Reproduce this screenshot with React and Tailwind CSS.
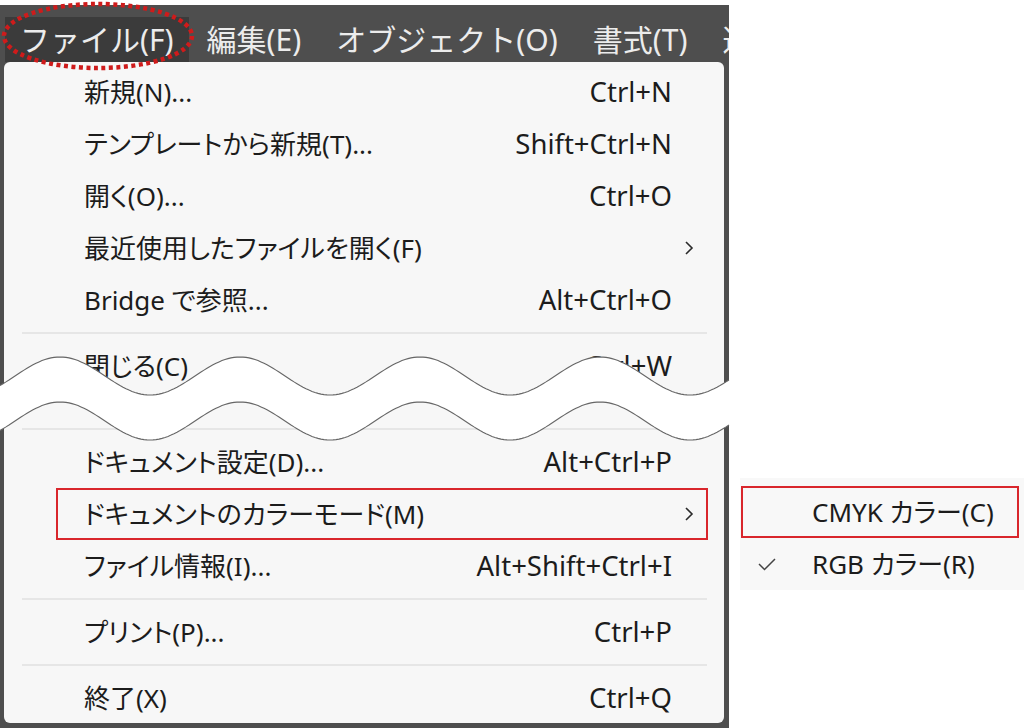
import React from "react";

const font = "font-['Noto_Sans','Noto_Sans_CJK_JP',sans-serif] [font-feature-settings:'palt']";

const menuItems = [
  { label: "新規(N)...", shortcut: "Ctrl+N" },
  { label: "テンプレートから新規(T)...", shortcut: "Shift+Ctrl+N" },
  { label: "開く(O)...", shortcut: "Ctrl+O" },
  { label: "最近使用したファイルを開く(F)", sub: true },
  { label: "Bridge で参照...", shortcut: "Alt+Ctrl+O" },
  { sep: true },
  { label: "閉じる(C)", shortcut: "Ctrl+W" },
  { gap: true },
  { sep: true },
  { label: "ドキュメント設定(D)...", shortcut: "Alt+Ctrl+P" },
  { label: "ドキュメントのカラーモード(M)", sub: true, boxed: true },
  { label: "ファイル情報(I)...", shortcut: "Alt+Shift+Ctrl+I" },
  { sep: true },
  { label: "プリント(P)...", shortcut: "Ctrl+P" },
  { sep: true },
  { label: "終了(X)", shortcut: "Ctrl+Q" },
];

const menuBar = ["ファイル(F)", "編集(E)", "オブジェクト(O)", "書式(T)", "選"];

function Chevron() {
  return (
    <svg width="10" height="18" viewBox="0 0 10 18" fill="none">
      <path d="M2 3 L8 9 L2 15" stroke="#2a2a2a" strokeWidth="1.6" />
    </svg>
  );
}

function Check() {
  return (
    <svg width="20" height="14" viewBox="0 0 20 14" fill="none">
      <path d="M2 7 L7.5 12.5 L18 2" stroke="#444" strokeWidth="1.5" />
    </svg>
  );
}

function MenuRow({ item }) {
  if (item.sep) {
    return (
      <div className="h-[14px] flex items-center ml-[18px] mr-[17px]">
        <div className="h-[2px] w-full bg-[#e6e6e6]" />
      </div>
    );
  }
  if (item.gap) return <div className="h-[30px]" />;
  return (
    <div
      className={
        "ml-[52px] mr-[16px] h-[52px] flex items-center border-2 " +
        (item.boxed ? "border-[#d9262c]" : "border-transparent")
      }
    >
      <span className="pl-[26px] flex-1 whitespace-nowrap">{item.label}</span>
      <span className="whitespace-nowrap text-[27.5px]">{item.shortcut}</span>
      <span className="w-[34px] flex justify-center">{item.sub && <Chevron />}</span>
    </div>
  );
}

function wave(c, from, to) {
  const pts = [];
  for (let x = from; x <= to; x += 3) {
    const y = c - 19 * Math.cos((2 * Math.PI * (x - 60)) / 180);
    pts.push([x, y]);
  }
  return pts;
}

function Overlay() {
  const up = wave(376, 0, 729);
  const low = wave(421, 0, 729);
  const line = (p) => "M" + p.map(([x, y]) => x + " " + y.toFixed(1)).join(" L");
  const fill = line(up) + " L" + low.slice().reverse().map(([x, y]) => x + " " + y.toFixed(1)).join(" L") + " Z";
  return (
    <svg className="absolute left-0 top-0 pointer-events-none" width="1024" height="728">
      <path d={fill} fill="#ffffff" />
      <path d={line(up)} fill="none" stroke="#666" strokeWidth="1.1" />
      <path d={line(low)} fill="none" stroke="#666" strokeWidth="1.1" />
      <ellipse
        cx="98"
        cy="36"
        rx="94"
        ry="32"
        fill="none"
        stroke="#cf1b1b"
        strokeWidth="4.5"
        strokeDasharray="4 3.5"
      />
    </svg>
  );
}

export default function App() {
  return (
    <div className={"relative w-[1024px] h-[728px] overflow-hidden bg-white flex " + font}>
      {/* App window */}
      <div className="mt-[5px] w-[729px] h-[723px] bg-[#4e4e4e] flex flex-col overflow-hidden">
        <div className="h-[57px] flex items-end pl-[5px] text-[30px] text-[#ececec] [font-feature-settings:normal]">
          {menuBar.map((m, i) => (
            <div
              key={m}
              className={
                "h-[45px] flex items-center whitespace-nowrap shrink-0 " +
                (i === 0 ? "bg-[#3b3b3b] pl-[15px] pr-[15px]" : "pl-[18px] pr-[17px]")
              }
            >
              {m}
            </div>
          ))}
        </div>
        <div className="ml-[4px] w-[720px] h-[661px] bg-[#f7f7f7] rounded-[6px] pt-[4px] text-[26px] text-[#1c1c1c]">
          {menuItems.map((item, i) => (
            <MenuRow key={i} item={item} />
          ))}
        </div>
      </div>

      {/* Submenu */}
      <div className="ml-[11px] mt-[478px] w-[284px] h-[112px] bg-[#f8f8f8] pt-[8px] text-[26px] text-[#1c1c1c]">
        <div className="ml-[1px] mr-[5px] h-[52px] flex items-center border-2 border-[#d9262c]">
          <span className="w-[69px]" />
          <span className="whitespace-nowrap">CMYK カラー(C)</span>
        </div>
        <div className="ml-[1px] mr-[5px] h-[52px] flex items-center border-2 border-transparent">
          <span className="w-[69px] pl-[14px]">
            <Check />
          </span>
          <span className="whitespace-nowrap">RGB カラー(R)</span>
        </div>
      </div>

      <Overlay />
    </div>
  );
}
